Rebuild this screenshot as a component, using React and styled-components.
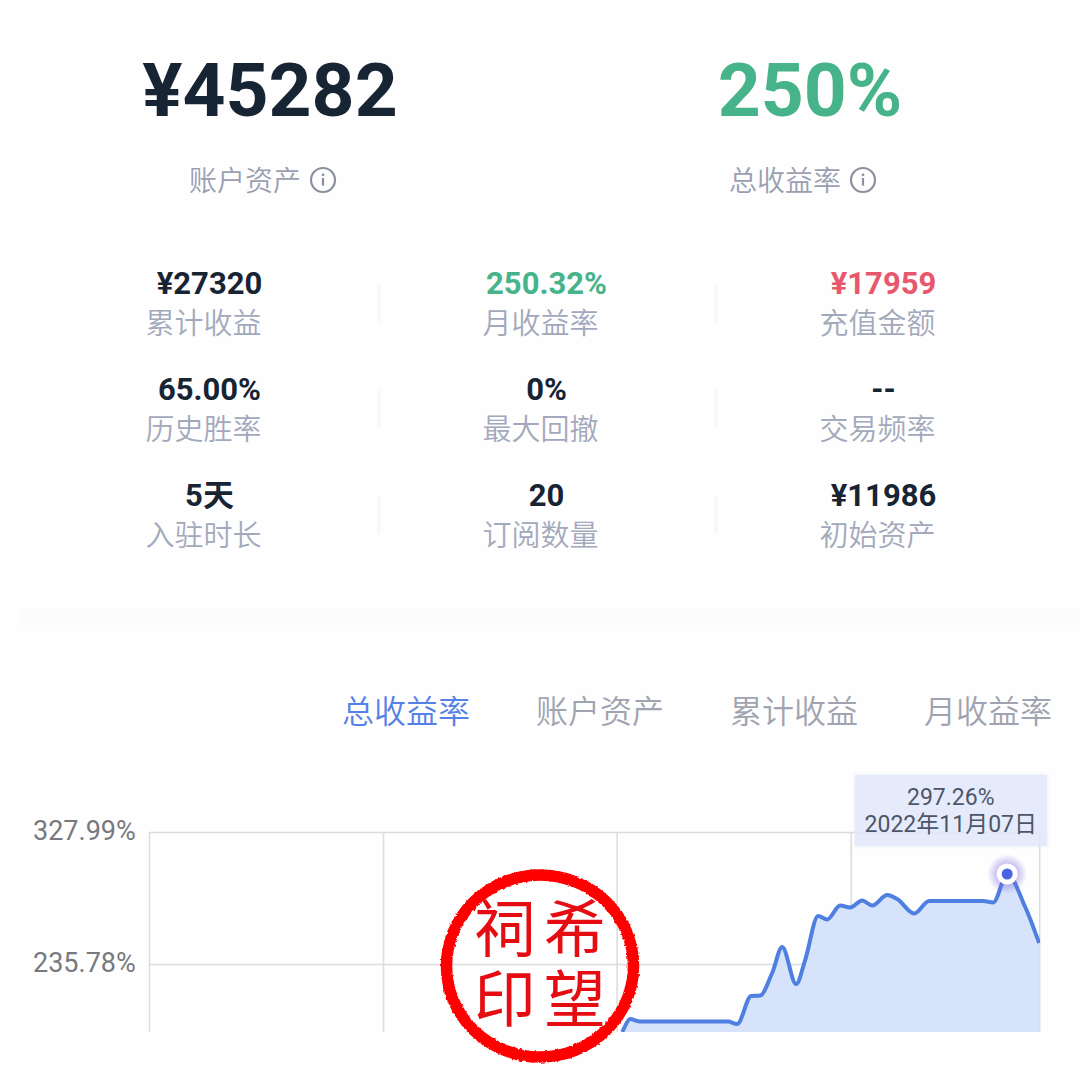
import React, { useState } from "react";
import styled, { createGlobalStyle } from "styled-components";

const GlobalStyle = createGlobalStyle`
  * { box-sizing: border-box; }
  body {
    margin: 0;
    background: #fefefe;
    font-family: Roboto, "Noto Sans CJK SC", sans-serif;
  }
`;

const tones = { dark: "#172434", green: "#46b38a", red: "#e8576d" };

const Page = styled.main`
  padding-top: 45px;
`;

const Headline = styled.section`
  display: grid;
  grid-template-columns: 1fr 1fr;
`;

const HeadlineItem = styled.div`
  display: flex;
  flex-direction: column;
  align-items: center;
  gap: 27px;
`;

const HeadlineValue = styled.strong`
  font-size: 75px;
  line-height: 90px;
  font-weight: 700;
  color: ${(p) => tones[p.$tone]};
`;

const HeadlineLabel = styled.div`
  display: flex;
  align-items: center;
  gap: 8px;
  padding-right: 14px;
  font-size: 28px;
  line-height: 32px;
  font-weight: 350;
  color: #9a9fb2;
`;

const LabelText = styled.span`
  padding-top: 4px;
`;

const InfoButton = styled.button`
  display: flex;
  padding: 0;
  border: 0;
  background: none;
  color: #8b8f9f;
`;

const Stats = styled.section`
  display: grid;
  grid-template-columns: repeat(3, 1fr);
  row-gap: 26px;
  padding: 66px 28px 0 41px;
`;

const Stat = styled.div`
  display: flex;
  flex-direction: column;
  align-items: center;
  position: relative;

  &:not(:nth-child(3n))::after {
    content: "";
    position: absolute;
    right: -3px;
    top: 20px;
    width: 4px;
    height: 38px;
    background: #f8f8fc;
  }
`;

const StatValue = styled.strong`
  font-size: 31px;
  line-height: 40px;
  font-weight: 700;
  color: ${(p) => tones[p.$tone]};
`;

const StatLabel = styled.span`
  padding-right: 12px;
  font-size: 29px;
  line-height: 40px;
  font-weight: 350;
  color: #a3a9bc;
`;

const Separator = styled.hr`
  height: 16px;
  margin: 53px 0 0 18px;
  border: 0;
  background: #fcfcfc;
`;

const Tabs = styled.div`
  display: flex;
  justify-content: flex-end;
  gap: 66px;
  padding: 67px 28px 0 28px;
`;

const Tab = styled.button`
  padding: 0;
  border: 0;
  background: none;
  font-family: inherit;
  font-size: 32px;
  line-height: 40px;
  font-weight: 350;
  color: ${(p) => (p.$active ? "#5580e8" : "#a0a3b0")};
`;

const Chart = styled.section`
  display: flex;
  gap: 13px;
  padding: 100px 40px 39px 33px;
`;

const Axis = styled.div`
  display: flex;
  flex-direction: column;
  gap: 100px;
  flex: none;
  margin-top: -17px;
  font-size: 27px;
  line-height: 32px;
  color: #77797f;
`;

const Plot = styled.div`
  position: relative;
  flex: 1;
`;

const PlotDrawing = styled.svg`
  display: block;
  width: 100%;
  height: auto;
  overflow: visible;
`;

const Tooltip = styled.div`
  position: absolute;
  top: -57px;
  right: -7px;
  padding: 9px 10px 8px;
  background: rgba(226, 231, 250, 0.85);
  box-shadow: 0 0 4px rgba(226, 231, 250, 0.85);
  font-size: 23px;
  line-height: 27px;
  text-align: center;
  color: #4c5668;
`;

const Seal = styled.div`
  position: absolute;
  top: 34px;
  left: 291px;
  width: 200px;
  height: 200px;
  display: grid;
  grid-template-columns: repeat(2, 70px);
  grid-auto-rows: 70px;
  place-content: center;
  place-items: center;
  font-size: 62px;
  line-height: 70px;
  color: #e60d12;
`;

const SealRing = styled.svg`
  position: absolute;
  inset: 0;
`;

const InfoIcon = () => (
  <svg width="28" height="28" viewBox="0 0 28 28" fill="none" aria-hidden="true">
    <circle cx="14" cy="14" r="12" stroke="currentColor" strokeWidth="2.2" />
    <circle cx="14" cy="8.8" r="1.4" fill="currentColor" />
    <path d="M14 12v7.6" stroke="currentColor" strokeWidth="2.2" />
  </svg>
);

const headline = [
  { value: "¥45282", label: "账户资产", tone: "dark" },
  { value: "250%", label: "总收益率", tone: "green" },
];

const stats = [
  { value: "¥27320", label: "累计收益", tone: "dark" },
  { value: "250.32%", label: "月收益率", tone: "green" },
  { value: "¥17959", label: "充值金额", tone: "red" },
  { value: "65.00%", label: "历史胜率", tone: "dark" },
  { value: "0%", label: "最大回撤", tone: "dark" },
  { value: "--", label: "交易频率", tone: "dark" },
  { value: "5天", label: "入驻时长", tone: "dark" },
  { value: "20", label: "订阅数量", tone: "dark" },
  { value: "¥11986", label: "初始资产", tone: "dark" },
];

const tabs = ["总收益率", "账户资产", "累计收益", "月收益率"];

const points = [
  [473, 200], [481, 187], [491, 189.5], [579, 189.5], [588, 192], [602, 164],
  [611, 163.5], [623, 141], [633, 115], [647, 152], [656, 128], [669, 84],
  [678, 87.5], [691, 73.5], [701, 75.5], [713, 68.5], [723, 73.5], [738, 63],
  [748, 67], [765, 81.5], [780, 69], [834, 69], [844, 70.5], [858, 42],
  [876, 75], [890, 111],
];

// Monotone cubic curve: turning points keep a flat tangent.
function curve(pts) {
  const slope = (a, b) => (b[1] - a[1]) / (b[0] - a[0]);
  const tangents = pts.map((p, i) => {
    if (i === 0) return slope(p, pts[1]);
    if (i === pts.length - 1) return slope(pts[i - 1], p);
    const before = slope(pts[i - 1], p);
    const after = slope(p, pts[i + 1]);
    return before * after <= 0 ? 0 : (2 * before * after) / (before + after);
  });
  return pts.slice(1).reduce((d, p, i) => {
    const q = pts[i];
    const h = (p[0] - q[0]) / 3;
    return `${d}C${q[0] + h} ${q[1] + h * tangents[i]} ${p[0] - h} ${p[1] - h * tangents[i + 1]} ${p[0]} ${p[1]}`;
  }, `M${pts[0][0]} ${pts[0][1]}`);
}

const line = curve(points);

export default function App() {
  const [active, setActive] = useState(0);
  return (
    <Page>
      <GlobalStyle />
      <Headline>
        {headline.map((h) => (
          <HeadlineItem key={h.label}>
            <HeadlineValue $tone={h.tone}>{h.value}</HeadlineValue>
            <HeadlineLabel>
              <LabelText>{h.label}</LabelText>
              <InfoButton type="button" aria-label={h.label}>
                <InfoIcon />
              </InfoButton>
            </HeadlineLabel>
          </HeadlineItem>
        ))}
      </Headline>
      <Stats>
        {stats.map((s) => (
          <Stat key={s.label}>
            <StatValue $tone={s.tone}>{s.value}</StatValue>
            <StatLabel>{s.label}</StatLabel>
          </Stat>
        ))}
      </Stats>
      <Separator />
      <Tabs role="tablist">
        {tabs.map((t, i) => (
          <Tab key={t} type="button" role="tab" aria-selected={i === active} $active={i === active} onClick={() => setActive(i)}>
            {t}
          </Tab>
        ))}
      </Tabs>
      <Chart>
        <Axis>
          <span>327.99%</span>
          <span>235.78%</span>
        </Axis>
        <Plot>
          <PlotDrawing viewBox="0 0 891 200" aria-hidden="true">
            <defs>
              <clipPath id="plot-area">
                <rect x="0" y="-4" width="891" height="204" />
              </clipPath>
              <radialGradient id="glow">
                <stop offset="0.45" stopColor="#7a62dc" stopOpacity="0.45" />
                <stop offset="1" stopColor="#7a62dc" stopOpacity="0" />
              </radialGradient>
            </defs>
            <path d="M0 .5H891M0 132.5H891M.5 0V200M234.5 0V200M468 0V200M702 0V200M890.5 0V200" stroke="#dcdcdf" strokeWidth="1.5" fill="none" />
            <g clipPath="url(#plot-area)">
              <path d={`${line}V200Z`} fill="#d6e3fb" />
              <path d={line} fill="none" stroke="#4f7fe0" strokeWidth="4" strokeLinejoin="round" />
            </g>
            <circle cx="858" cy="42" r="20" fill="url(#glow)" />
            <circle cx="858" cy="42" r="10.5" fill="#fff" />
            <circle cx="858" cy="42" r="5.5" fill="#4a63e4" />
          </PlotDrawing>
          <Tooltip>
            <div>297.26%</div>
            <div>2022年11月07日</div>
          </Tooltip>
          <Seal>
            <SealRing viewBox="0 0 200 200" aria-hidden="true">
              <filter id="worn-edge">
                <feTurbulence type="fractalNoise" baseFrequency="0.35" numOctaves="2" seed="4" />
                <feDisplacementMap in="SourceGraphic" scale="3" xChannelSelector="R" yChannelSelector="G" />
              </filter>
              <ellipse cx="100" cy="100" rx="93.5" ry="91" fill="none" stroke="#fe0000" strokeWidth="11.5" filter="url(#worn-edge)" />
            </SealRing>
            <span>祠</span>
            <span>希</span>
            <span>印</span>
            <span>望</span>
          </Seal>
        </Plot>
      </Chart>
    </Page>
  );
}
